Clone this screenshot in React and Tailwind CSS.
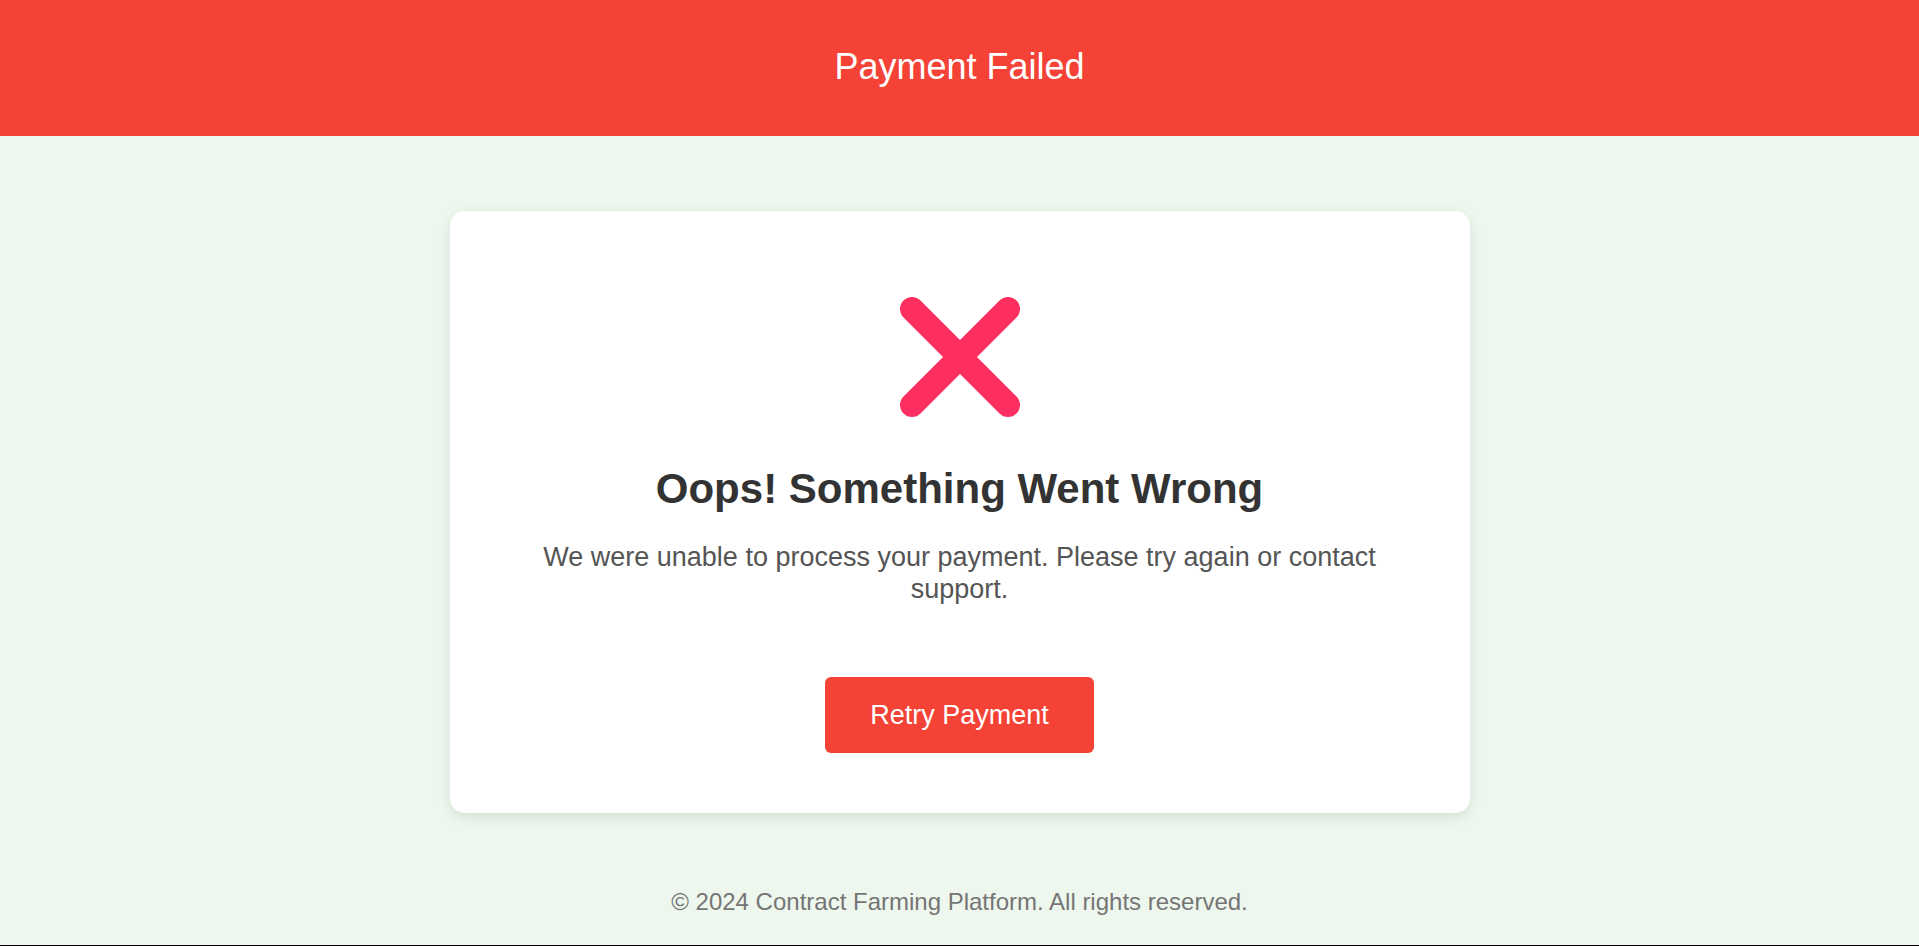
export default function App() {
  return (
    <div className="min-h-screen flex flex-col bg-[#eef7ee] font-['Liberation_Sans',Arial,sans-serif]">
      <header className="h-[136px] bg-[#f44336] flex items-center justify-center pb-[2px]">
        <h1 className="text-[36px] leading-[1.15] text-white">Payment Failed</h1>
      </header>

      <main className="pt-[75px]">
        <div className="mx-auto w-[1020px] rounded-[15px] bg-white px-[60px] pt-[86px] pb-[60px] flex flex-col items-center text-center shadow-[0_4px_14px_rgba(0,0,0,0.1)]">
          <svg width="120" height="120" viewBox="0 0 120 120" aria-hidden="true">
            <g stroke="#fc2f60" strokeWidth="24" strokeLinecap="round">
              <line x1="12" y1="12" x2="108" y2="108" />
              <line x1="108" y1="12" x2="12" y2="108" />
            </g>
          </svg>
          <h2 className="mt-[48px] text-[42px] leading-[1.15] font-bold text-[#333]">
            Oops! Something Went Wrong
          </h2>
          <p className="mt-[28px] text-[27px] leading-[32px] text-[#555]">
            We were unable to process your payment. Please try again or contact support.
          </p>
          <button className="mt-[72px] h-[76px] px-[45px] rounded-[6px] bg-[#f44336] text-[27px] text-white">
            Retry Payment
          </button>
        </div>
      </main>

      <footer className="mt-[75px] text-center text-[24px] leading-[1.15] text-[#757575]">
        © 2024 Contract Farming Platform. All rights reserved.
      </footer>
      <div className="flex-1" />
      <div className="h-px bg-black" />
    </div>
  )
}
